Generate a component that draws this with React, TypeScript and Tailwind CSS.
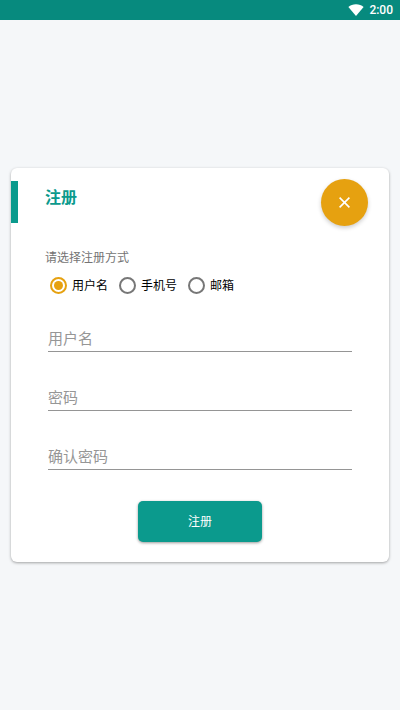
import { useState } from "react";

const REGISTER_METHODS = [
  { value: "username", label: "用户名" },
  { value: "phone", label: "手机号" },
  { value: "email", label: "邮箱" },
];

function StatusBar() {
  return (
    <div className="flex h-5 items-center justify-end gap-[5px] bg-[#078a7e] pr-[7px] text-white">
      <svg className="h-3 w-4" viewBox="0 0 16 12" fill="currentColor" aria-hidden="true">
        <path d="M0.4 3.1C2.4 1.3 5 0.3 8 0.3s5.6 1 7.6 2.8L8 12z" />
      </svg>
      <span className="text-[12px] leading-4 font-medium">2:00</span>
    </div>
  );
}

function TextField({ name, label, type = "text" }: { name: string; label: string; type?: string }) {
  return (
    <input
      name={name}
      type={type}
      aria-label={label}
      placeholder={label}
      className="h-[26px] w-full border-b border-[#959595] bg-transparent text-[15px] leading-5 text-gray-900 outline-none placeholder:text-[#969696]"
    />
  );
}

export default function App() {
  const [method, setMethod] = useState("username");

  return (
    <div className="flex min-h-screen flex-col bg-[#f5f7f9] font-[Roboto,'Noto_Sans_CJK_SC',sans-serif]">
      <StatusBar />

      <main className="flex flex-1 items-center justify-center px-[11px]">
        <section className="w-full max-w-md rounded-md bg-white pt-2.5 pb-5 shadow-[0_1px_3px_rgba(0,0,0,0.35)]">
          <header className="flex h-12 items-center pr-[21px]">
            <span className="h-[42px] w-[7px] bg-[#0b9a8d]" />
            <h1 className="ml-[27px] flex-1 pb-2 text-[16px] leading-6 font-bold text-[#0b9a8d]">注册</h1>
            <button
              type="button"
              aria-label="关闭"
              className="flex size-[47px] items-center justify-center rounded-full bg-[#e6a110] text-white shadow-[0_2px_4px_rgba(0,0,0,0.2)]"
            >
              <svg className="size-[11px]" viewBox="0 0 11 11" fill="none" stroke="currentColor" strokeWidth="1.6" aria-hidden="true">
                <path d="M0.6 0.6l9.8 9.8M10.4 0.6L0.6 10.4" />
              </svg>
            </button>
          </header>

          <form className="mt-6" onSubmit={(event) => event.preventDefault()}>
            <fieldset className="px-[34px]">
              <legend className="text-[12px] leading-4 text-[#747474]">请选择注册方式</legend>
              <div className="mt-[11px] ml-[5px] flex gap-[11px]">
                {REGISTER_METHODS.map((option) => (
                  <label key={option.value} className="flex items-center gap-[5px] text-[12px] leading-4 text-black">
                    <input
                      type="radio"
                      name="method"
                      value={option.value}
                      checked={method === option.value}
                      onChange={() => setMethod(option.value)}
                      className="size-[17px] appearance-none rounded-full border-2 border-[#777777] bg-clip-content p-[2px] checked:border-[#e6a110] checked:bg-[#e6a110]"
                    />
                    {option.label}
                  </label>
                ))}
              </div>
            </fieldset>

            <div className="mt-8 flex flex-col gap-[33px] px-[37px]">
              <TextField name="username" label="用户名" />
              <TextField name="password" label="密码" type="password" />
              <TextField name="confirmPassword" label="确认密码" type="password" />
            </div>

            <div className="mt-[31px] flex justify-center">
              <button
                type="submit"
                className="h-[41px] w-[124px] rounded-[5px] bg-[#0b9a8d] text-[12px] leading-4 text-white shadow-[0_1px_3px_rgba(0,0,0,0.4)]"
              >
                注册
              </button>
            </div>
          </form>
        </section>
      </main>
    </div>
  );
}
